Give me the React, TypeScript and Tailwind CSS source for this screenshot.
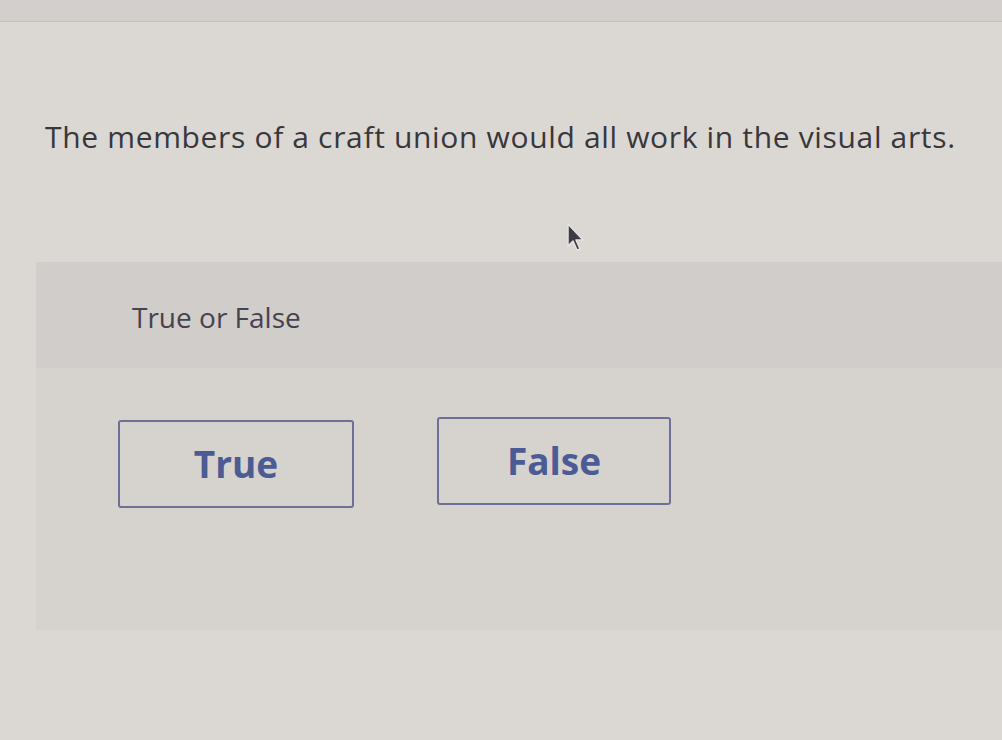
export default function App() {
  return (
    <div className="relative w-[1002px] h-[740px] overflow-hidden bg-[#dbd7d3] font-['Open_Sans',sans-serif]">
      {/* top strip */}
      <div className="h-[22px] bg-[#d3cfcc] border-b border-[#c6c2bf]" />

      {/* question */}
      <div className="pt-[95px] pl-[45px] h-[240px]">
        <p className="text-[30px] leading-[40px] text-[#38373c] tracking-[0.66px]">
          The members of a craft union would all work in the visual arts.
        </p>
      </div>

      {/* answer panel */}
      <div className="ml-[36px]">
        <div className="h-[106px] bg-[#d1cdca] flex items-center pl-[96px]">
          <span className="text-[28px] text-[#474250] pt-[4px]">True or False</span>
        </div>
        <div className="h-[262px] bg-[#d6d2ce] pt-[52px] pl-[82px]">
          <div className="flex items-start gap-[83px]">
            <button className="w-[236px] h-[88px] border-2 border-[#6f6f98] rounded-[3px] flex items-center justify-center text-[37px] font-bold text-[#4b5b93]">
              True
            </button>
            <button className="w-[234px] h-[88px] -mt-[3px] border-2 border-[#6f6f98] rounded-[3px] flex items-center justify-center text-[37px] font-bold text-[#4b5b93]">
              False
            </button>
          </div>
        </div>
      </div>

      {/* mouse cursor */}
      <svg className="absolute left-[565px] top-[222px]" width="22" height="32" viewBox="0 0 22 32">
        <path d="M3 2 L3 24 L8 19 L12 28 L15 27 L11 18 L18 18 Z" fill="#3d3b44" stroke="#e6e3e0" strokeWidth="1.5" strokeLinejoin="round" />
      </svg>
    </div>
  );
}
